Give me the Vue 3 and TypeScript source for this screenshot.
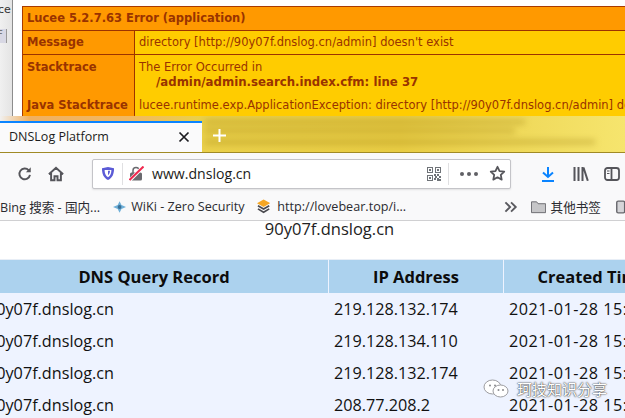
<script setup lang="ts">
const rows = [
  { host: '90y07f.dnslog.cn', ip: '219.128.132.174', time: '2021-01-28 15:27:14' },
  { host: '90y07f.dnslog.cn', ip: '219.128.134.110', time: '2021-01-28 15:27:14' },
  { host: '90y07f.dnslog.cn', ip: '219.128.132.174', time: '2021-01-28 15:27:14' },
  { host: '90y07f.dnslog.cn', ip: '208.77.208.2', time: '2021-01-28 15:27:14' },
]
</script>

<template>
  <div class="shot">
    <section class="behind">
      <aside class="sliver">
        <span class="sliver-text">ce</span>
        <span class="sliver-btn">F</span>
      </aside>
      <div class="err">
        <div class="err-head">Lucee 5.2.7.63 Error (application)</div>
        <div class="err-row msg">
          <div class="k">Message</div>
          <div class="v">directory [http://90y07f.dnslog.cn/admin] doesn't exist</div>
        </div>
        <div class="err-row st">
          <div class="k">Stacktrace</div>
          <div class="v">The Error Occurred in<br /><b class="indent">/admin/admin.search.index.cfm: line 37</b></div>
        </div>
        <div class="err-row java">
          <div class="k">Java Stacktrace</div>
          <div class="v">lucee.runtime.exp.ApplicationException: directory [http://90y07f.dnslog.cn/admin] doesn't exist</div>
        </div>
      </div>
    </section>

    <section class="tabs">
      <div class="tab">
        <span class="tab-title">DNSLog Platform</span>
        <svg class="tab-x" width="12" height="12" viewBox="0 0 12 12"><path d="M1.500 1.500l9 9M10.500 1.500l-9 9" stroke="#1c1c20" stroke-width="1.700" fill="none" /></svg>
      </div>
      <svg class="plus" width="15" height="15" viewBox="0 0 15 15"><path d="M7.500 1v13M1 7.500h13" stroke="#fff" stroke-width="2" fill="none" /></svg>
      <div class="blur">
        <i class="b1"></i><i class="b2"></i><i class="b3"></i>
      </div>
    </section>

    <section class="nav">
      <svg class="reload" width="16" height="16" viewBox="0 0 18 18"><path d="M14.600 10a6 6 0 1 1-1.400-5.100" fill="none" stroke="#55555a" stroke-width="2.200" /><path d="M15.500 1.500v5.600H10z" fill="#55555a" /></svg>
      <svg class="home" width="16" height="16" viewBox="0 0 18 18"><path d="M1 9.200 9 2l8 7.200M3.500 8v8h3.800v-4.500h3.400V16h3.800V8" fill="none" stroke="#55555a" stroke-width="2.200" /></svg>
      <div class="url">
        <svg width="14" height="15" viewBox="0 0 14 15"><path d="M1 2.200 7 1l6 1.200c.2 5.400-1.600 9.800-6 11.800C2.600 12 .8 7.600 1 2.200z" fill="#5b5bd6" /><path d="M3.600 4h6.800c0 3.200-1 5.700-3.400 7.200C4.600 9.700 3.600 7.200 3.600 4z" fill="#fff" /><path d="M7 4.800h2c0 1.900-.6 3.300-2 4.400z" fill="#5b5bd6" /></svg>
        <i class="url-sep"></i>
        <svg class="lock" width="15" height="15" viewBox="0 0 15 15"><rect x="1" y="6.500" width="12" height="8" rx="1.500" fill="#6a6a6f" /><path d="M4 7V4.500a3 3 0 0 1 6 0V7" fill="none" stroke="#6a6a6f" stroke-width="1.500" /><path d="M1 14 14 1" stroke="#fff" stroke-width="3.500" /><path d="M.5 14 14.500 .5" stroke="#f0294f" stroke-width="2" /></svg>
        <span class="addr">www.dnslog.cn</span>
        <svg class="qr" width="14" height="14" viewBox="0 0 14 14" fill="#6f7378"><path d="M0 0h6v6H0zM1 1v4h4V1zM2 2h2v2H2zM8 0h6v6H8zM9 1v4h4V1zM10 2h2v2h-2zM0 8h6v6H0zM1 9v4h4V9zM2 10h2v2H2zM7 7h2v2H7zM10 7h2v2h-2zM8 9h2v2H8zM12 9h2v2h-2zM7 11h2v2H7zM10 11h2v3h-2zM12 12h2v2h-2z" fill-rule="evenodd" /></svg>
        <i class="url-sep sep2"></i>
        <span class="dots"><i></i><i></i><i></i></span>
        <svg class="star" width="17" height="17" viewBox="0 0 17 17"><path d="M8.500 1.800l2.050 4.300 4.700.6-3.450 3.250.9 4.650-4.200-2.300-4.200 2.300.9-4.650L1.750 6.700l4.700-.6z" fill="none" stroke="#56565b" stroke-width="1.800" stroke-linejoin="round" /></svg>
      </div>
      <svg class="dl" width="14" height="16" viewBox="0 0 14 16"><path d="M7 1v10M2 6.500 7 11l5-4.500" fill="none" stroke="#0a84ff" stroke-width="2" /><path d="M1 15h12" stroke="#0a84ff" stroke-width="2" /></svg>
      <svg class="lib" width="16" height="14" viewBox="0 0 16 14"><path d="M1.500 0v14M5.500 0v14M9.500 0v14M10.500 .5l4.300 13.300" stroke="#55555a" stroke-width="2" fill="none" /></svg>
      <svg class="side" width="16" height="14" viewBox="0 0 16 14"><rect x="1" y="1" width="14" height="12" rx="2.500" fill="none" stroke="#55555a" stroke-width="1.800" /><path d="M7.500 1v12" stroke="#55555a" stroke-width="1.800" /><path d="M3 4h2.500M3 6.500h2.500" stroke="#55555a" stroke-width="1.200" /></svg>
    </section>

    <section class="marks">
      <span class="mark m-bing">Bing 搜索 - 国内...</span>
      <svg class="m-ico" width="14" height="14" viewBox="0 0 14 14"><path d="M0 7 5 5 7 1l2 4 5 2-5 2-2 4-2-4z" fill="#6fb0d8" /><circle cx="7" cy="7" r="2" fill="#3b6f95" /></svg>
      <span class="mark m-wiki">WiKi - Zero Security</span>
      <svg class="m-ico2" width="14" height="15" viewBox="0 0 14 15"><path d="M7 0l7 4-7 4-7-4z" fill="#f5a623" /><path d="M1 6.800l6 3.400 6-3.400M1 10l6 3.600L13 10" fill="none" stroke="#4a4a4f" stroke-width="1.800" /></svg>
      <span class="mark m-love">http://lovebear.top/i...</span>
      <svg class="chev" width="14" height="12" viewBox="0 0 14 12"><path d="M1.500 1l5 5-5 5M7.500 1l5 5-5 5" fill="none" stroke="#5a5a5f" stroke-width="2" /></svg>
      <svg class="folder" width="16" height="14" viewBox="0 0 16 14"><path d="M.5 13V1.500h5.500l1.500 2h8V13z" fill="#c6c6c8" stroke="#6a6a6f" /></svg>
      <span class="mark m-other">其他书签</span>
      <svg class="phone" width="10" height="14" viewBox="0 0 10 14"><rect x=".8" y=".8" width="8.400" height="12.400" rx="1.500" fill="#d5d5d8" stroke="#66666b" stroke-width="1.500" /></svg>
    </section>

    <main class="page">
      <div class="domain">90y07f.dnslog.cn</div>
      <div class="grid head">
        <div class="th">DNS Query Record</div>
        <div class="th">IP Address</div>
        <div class="th">Created Time</div>
      </div>
      <div v-for="(r, i) in rows" :key="i" class="grid row">
        <div class="td">{{ r.host }}</div>
        <div class="td">{{ r.ip }}</div>
        <div class="td time">{{ r.time }}</div>
      </div>
      <div class="wm">
        <svg width="26" height="20" viewBox="0 0 26 20"><ellipse cx="9.500" cy="8" rx="8.500" ry="7" fill="#fff" stroke="#9c9ca0" /><ellipse cx="17.500" cy="12" rx="7.500" ry="6" fill="#fff" stroke="#9c9ca0" /><circle cx="7" cy="6.500" r="1" fill="#8a8a8e" /><circle cx="12" cy="6.500" r="1" fill="#8a8a8e" /><circle cx="15.500" cy="11" r="1" fill="#8a8a8e" /><circle cx="20" cy="11" r="1" fill="#8a8a8e" /></svg>
        <span>珂技知识分享</span>
      </div>
    </main>
  </div>
</template>

<style>
html, body { margin: 0; padding: 0; background: #fff; overflow: hidden; }
</style>

<style scoped>
.shot {
  width: 625px;
  height: 418px;
  overflow: hidden;
  position: relative;
  display: flex;
  flex-direction: column;
  background: #fff;
  font-family: "Open Sans", "Noto Sans CJK SC", sans-serif;
}

/* window behind the browser */
.behind {
  height: 116px;
  flex: none;
  display: flex;
  background: #fff;
  overflow: hidden;
}
.sliver {
  width: 12px;
  margin-right: 9px;
  flex: none;
  background: linear-gradient(90deg, #f0f0f0, #e4e4e4);
  border-right: 1px solid #8c8c8c;
  position: relative;
  font: 11px "DejaVu Sans", sans-serif;
  color: #333;
}
.sliver-text { position: absolute; left: -2px; top: 3px; }
.sliver-btn {
  position: absolute;
  top: 29px;
  left: -3px;
  width: 9px;
  height: 14px;
  background: #d8d8e4;
  color: #777;
  font-size: 10px;
  border-right: 1px solid #999;
}
.err {
  margin-top: 6px;
  width: 700px;
  flex: none;
  background: #9c3300;
  border: 1px solid #a83a00;
  border-right: 0;
  box-sizing: border-box;
  color: #993300;
  font: 11.500px/15px "DejaVu Sans", sans-serif;
}
.err-head {
  height: 23px;
  box-sizing: border-box;
  padding: 4px 4px;
  background: #ff9900;
  font-weight: bold;
}
.err-row { display: grid; grid-template-columns: 111px 1fr; gap: 1px; margin-top: 1px; }
.k { background: #ff9900; font-weight: bold; padding: 4px 4px; }
.v { background: #ffcc00; padding: 4px 4px; }
.msg { height: 23px; }
.st { height: 37px; }
.st .k { padding-top: 5px; }
.st .v { padding-top: 5px; line-height: 15px; }
.java { height: 30px; }
.java .k, .java .v { padding-top: 5px; }
.indent { margin-left: 17px; font-size: 11.750px; }

/* tab strip */
.tabs {
  height: 37px;
  flex: none;
  position: relative;
  box-sizing: border-box;
  display: flex;
  align-items: flex-end;
  background: linear-gradient(90deg, #f0f0f0 0, #f0b060 30px, #f2b860 130px, #ead04a 200px, #e8cc44 400px, #f6e56e 100%);
  border-bottom: 1px solid #a08a25;
  overflow: hidden;
}
.tab {
  width: 202px;
  height: 31px;
  flex: none;
  display: flex;
  align-items: center;
  box-sizing: border-box;
  padding: 0 12px 2px 9px;
  background: #fafafb;
  border-top: 2px solid #0a84ff;
  position: relative;
  z-index: 1;
  font-size: 12.500px;
  color: #1c1c20;
}
.tab-title { flex: 1; }
.plus { margin: 0 0 9px 10px; position: relative; z-index: 1; }
.blur { position: absolute; inset: 0; filter: blur(3px); }
.blur i { position: absolute; height: 4px; background: rgba(150, 120, 10, .4); display: block; }
.b1 { left: 205px; top: 4px; width: 320px; }
.b2 { left: 205px; top: 13px; width: 310px; }
.b3 { left: 205px; top: 24px; width: 390px; }

/* nav bar */
.nav {
  height: 41px;
  flex: none;
  display: flex;
  align-items: center;
  box-sizing: border-box;
  padding: 0 0 0 17px;
  background: #f9f9fa;
}
.home { margin-left: 15px; }
.url {
  margin-left: 28px;
  width: 419px;
  height: 30px;
  box-sizing: border-box;
  flex: none;
  display: flex;
  align-items: center;
  padding: 0 4px 0 8px;
  background: #fff;
  border: 1px solid #c4c4c8;
  border-radius: 2px;
  box-shadow: 0 1px 2px rgba(0, 0, 0, .1);
}
.url-sep { width: 1px; height: 22px; background: #e0e0e2; margin-left: 7px; }
.lock { margin-left: 6px; }
.addr { margin-left: 8px; font-size: 14.100px; color: #1c1c20; flex: 1; }
.sep2 { margin: 0 11px 0 7px; }
.dots { display: flex; gap: 3px; margin-right: 11px; }
.dots i { width: 4px; height: 4px; border-radius: 50%; background: #606065; }
.dl { margin-left: 30px; }
.lib { margin-left: 18px; }
.side { margin-left: 15px; }

/* bookmarks */
.marks {
  height: 27px;
  flex: none;
  display: flex;
  align-items: center;
  box-sizing: border-box;
  background: #f9f9fa;
  border-bottom: 1px solid #d0d0d2;
  padding-bottom: 1px;
  font-size: 12.600px;
  color: #2b2b30;
  white-space: nowrap;
}
.m-bing { width: 113px; flex: none; margin-right: 0; }
.m-wiki { margin-left: 5px; width: 126px; flex: none; }
.m-love { margin-left: 7px; width: 227px; flex: none; }
.folder { margin-left: 13px; }
.m-other { margin-left: 5px; width: 52px; flex: none; }
.phone { margin-left: 13px; }

/* page */
.page { flex: 1; position: relative; background: #fff; min-height: 0; }
.domain {
  text-align: center;
  font-size: 16.500px;
  line-height: 16px;
  color: #222;
  height: 38px;
  padding-left: 33px;
  box-sizing: border-box;
  margin-left: 1px;
}
.grid {
  display: grid;
  grid-template-columns: 349px 175px 178px;
  margin-left: -20px;
  width: 702px;
  white-space: nowrap;
}
.head { height: 32px; }
.row { height: 32px; background: #eef3ff; color: #111; font-size: 16.200px; align-items: center; }
.head .th {
  background: #acd2ee;
  font-size: 16.500px;
  font-weight: bold;
  color: #0c0c0c;
  text-align: center;
  line-height: 33px;
  border-right: 1px solid #eef3ff;
  border-top: 1px solid #e8eef6;
}
.td { padding-left: 5px; white-space: nowrap; padding-top: 3px; overflow: hidden; }
.row .td:first-child { padding-left: 7px; }
.time { letter-spacing: .5px; }
.wm {
  position: absolute;
  left: 483px;
  top: 157px;
  display: flex;
  align-items: center;
  gap: 8px;
  font-size: 15px;
  color: #fff;
  text-shadow: 0 0 2px #333, 0 0 1px #333;
}
</style>
